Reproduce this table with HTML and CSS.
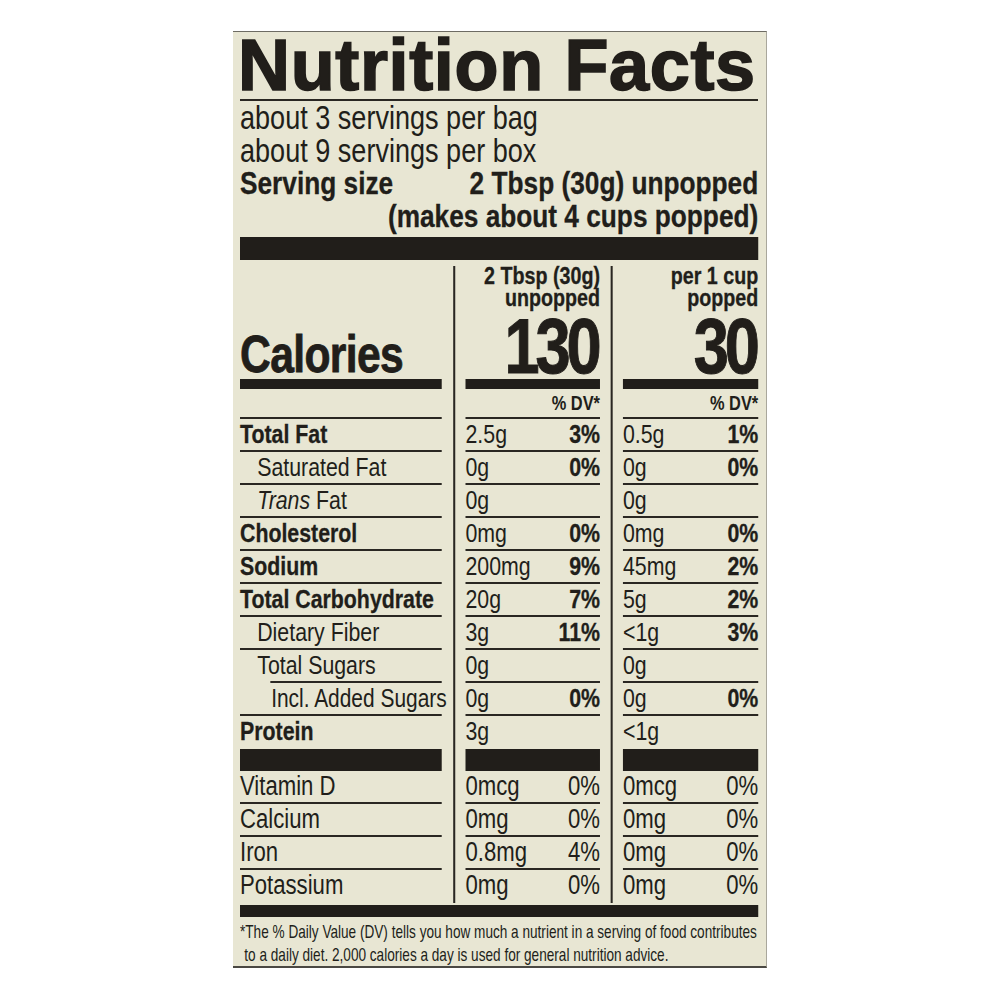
FILE: index.html
```html
<!DOCTYPE html>
<html lang="en">
<head>
<meta charset="utf-8">
<title>Nutrition Facts</title>
<link rel="stylesheet" href="styles.css">
</head>
<body>
<div class="page">
  <section class="label">
    <h1 class="title">Nutrition Facts</h1>
    <div class="body">
      <div class="servings">
        <div class="line">about 3 servings per bag</div>
        <div class="line">about 9 servings per box</div>
        <div class="line size"><span>Serving size</span><span>2 Tbsp (30g) unpopped</span></div>
        <div class="line size-note">(makes about 4 cups popped)</div>
      </div>
      <div class="bar-xl"></div>
      <div class="table">
        <div class="col col1">
          <div class="head head-left"><div class="cal">Calories</div></div>
          <div class="bar-m"></div>
          <div class="dv"></div>
          <div class="row b">Total Fat</div>
          <div class="row ind1">Saturated Fat</div>
          <div class="row ind1"><span><i>Trans</i> Fat</span></div>
          <div class="row b">Cholesterol</div>
          <div class="row b">Sodium</div>
          <div class="row b">Total Carbohydrate</div>
          <div class="row ind1">Dietary Fiber</div>
          <div class="row ind1 short-line">Total Sugars</div>
          <div class="row ind2">Incl. Added Sugars</div>
          <div class="row b nb">Protein</div>
          <div class="bar-l"></div>
          <div class="row v">Vitamin D</div>
          <div class="row v">Calcium</div>
          <div class="row v">Iron</div>
          <div class="row v nb">Potassium</div>
        </div>
        <div class="sep"></div>
        <div class="col col2">
          <div class="head"><div class="head-text">2 Tbsp (30g)<br>unpopped</div><div class="big">130</div></div>
          <div class="bar-m"></div>
          <div class="dv">% DV*</div>
          <div class="row"><span>2.5g</span><b>3%</b></div>
          <div class="row"><span>0g</span><b>0%</b></div>
          <div class="row"><span>0g</span></div>
          <div class="row"><span>0mg</span><b>0%</b></div>
          <div class="row"><span>200mg</span><b>9%</b></div>
          <div class="row"><span>20g</span><b>7%</b></div>
          <div class="row"><span>3g</span><b>11%</b></div>
          <div class="row"><span>0g</span></div>
          <div class="row"><span>0g</span><b>0%</b></div>
          <div class="row nb"><span>3g</span></div>
          <div class="bar-l"></div>
          <div class="row v"><span>0mcg</span><span>0%</span></div>
          <div class="row v"><span>0mg</span><span>0%</span></div>
          <div class="row v"><span>0.8mg</span><span>4%</span></div>
          <div class="row v nb"><span>0mg</span><span>0%</span></div>
        </div>
        <div class="sep sep2"></div>
        <div class="col col3">
          <div class="head"><div class="head-text">per 1 cup<br>popped</div><div class="big">30</div></div>
          <div class="bar-m"></div>
          <div class="dv">% DV*</div>
          <div class="row"><span>0.5g</span><b>1%</b></div>
          <div class="row"><span>0g</span><b>0%</b></div>
          <div class="row"><span>0g</span></div>
          <div class="row"><span>0mg</span><b>0%</b></div>
          <div class="row"><span>45mg</span><b>2%</b></div>
          <div class="row"><span>5g</span><b>2%</b></div>
          <div class="row"><span>&lt;1g</span><b>3%</b></div>
          <div class="row"><span>0g</span></div>
          <div class="row"><span>0g</span><b>0%</b></div>
          <div class="row nb"><span>&lt;1g</span></div>
          <div class="bar-l"></div>
          <div class="row v"><span>0mcg</span><span>0%</span></div>
          <div class="row v"><span>0mg</span><span>0%</span></div>
          <div class="row v"><span>0mg</span><span>0%</span></div>
          <div class="row v nb"><span>0mg</span><span>0%</span></div>
        </div>
      </div>
      <div class="bar-xxl"></div>
      <p class="foot">*The % Daily Value (DV) tells you how much a nutrient in a serving of food contributes<br>to a daily diet. 2,000 calories a day is used for general nutrition advice.</p>
    </div>
  </section>
</div>
</body>
</html>
```
FILE: styles.css
```css
* { box-sizing: border-box; }

body {
  margin: 0;
  background: #ffffff;
  color: #211e1a;
  font-family: "Liberation Sans", Arial, sans-serif;
}

.page {
  padding: 31px 0 0 233px;
}

.label {
  width: 534px;
  height: 937px;
  background: #e8e6d3;
  padding: 4px 8px 0 7px;
  border-top: 1px solid #6d6b63;
  border-right: 1px solid #a9a79c;
  border-bottom: 2px solid #4a4843;
}

.title {
  margin: 0;
  font-weight: 700;
  font-size: 72px;
  line-height: 58px;
  letter-spacing: 0.65px;
  text-indent: -2px;
  -webkit-text-stroke: 1.6px #211e1a;
  white-space: nowrap;
  padding: 0 0 5px 0;
  border-bottom: 2px solid #2a2722;
}

/* condensed body: Helvetica Condensed look, drawn at 82% width */
.body {
  width: 632px;
  transform: scaleX(0.82);
  transform-origin: 0 0;
}

.servings .line {
  font-size: 33px;
  line-height: 33px;
  white-space: nowrap;
}

.servings .size {
  display: flex;
  justify-content: space-between;
  font-weight: 700;
  font-size: 32px;
  -webkit-text-stroke: 0.3px #211e1a;
}

.servings .size-note {
  text-align: right;
  font-weight: 700;
  font-size: 32px;
  -webkit-text-stroke: 0.3px #211e1a;
}

.bar-xl {
  height: 23px;
  margin-top: 4px;
  background: #211e1a;
}

.table {
  display: flex;
}

.col1 { width: 246px; }
.col2 { width: 164px; }
.col3 { width: 165px; }

.sep {
  width: 29px;
  margin-top: 6px;
  background: linear-gradient(#2a2722, #2a2722) no-repeat 14px 0 / 2.5px 100%;
}

.sep2 {
  width: 28px;
  background-position: 13px 0;
}

.head {
  height: 119px;
  display: flex;
  flex-direction: column;
  align-items: flex-end;
  padding-top: 5px;
}

.head-left {
  justify-content: flex-end;
  align-items: flex-start;
}

.head-text {
  font-weight: 700;
  font-size: 24px;
  line-height: 22px;
  text-align: right;
  white-space: nowrap;
  -webkit-text-stroke: 0.3px #211e1a;
}

.big {
  margin-top: auto;
  font-weight: 700;
  font-size: 77px;
  line-height: 65px;
  letter-spacing: -5px;
  margin-right: 3px;
  -webkit-text-stroke: 1px #211e1a;
}

.cal {
  font-weight: 700;
  font-size: 52px;
  line-height: 50px;
  letter-spacing: -0.8px;
  -webkit-text-stroke: 0.8px #211e1a;
}

.bar-m {
  height: 10px;
  background: #211e1a;
}

.dv {
  height: 30px;
  border-bottom: 2px solid #2a2722;
  font-weight: 700;
  font-size: 20px;
  line-height: 28px;
  text-align: right;
}

.row {
  height: 33px;
  border-bottom: 2px solid #2a2722;
  font-size: 26px;
  line-height: 31px;
  display: flex;
  justify-content: space-between;
  white-space: nowrap;
}

.row.b { font-weight: 700; }
.row b, .row.b { -webkit-text-stroke: 0.3px #211e1a; }
.row.nb { border-bottom: none; }
.row.v { font-size: 27px; }

.ind1 { padding-left: 21px; }
.ind2 { padding-left: 38px; font-size: 25.5px; }

.short-line {
  border-bottom: none;
  background: linear-gradient(#2a2722, #2a2722) no-repeat 37px 100% / calc(100% - 37px) 2px;
}

.bar-l {
  height: 22px;
  background: #211e1a;
}

.bar-xxl {
  height: 12px;
  margin-top: 2px;
  background: #211e1a;
}

.foot {
  width: 724px;
  margin: 0;
  padding: 3px 0 0 6px;
  text-indent: -6px;
  font-size: 19px;
  line-height: 23px;
  white-space: nowrap;
  transform: scaleX(0.873);
  transform-origin: 0 0;
}
```
